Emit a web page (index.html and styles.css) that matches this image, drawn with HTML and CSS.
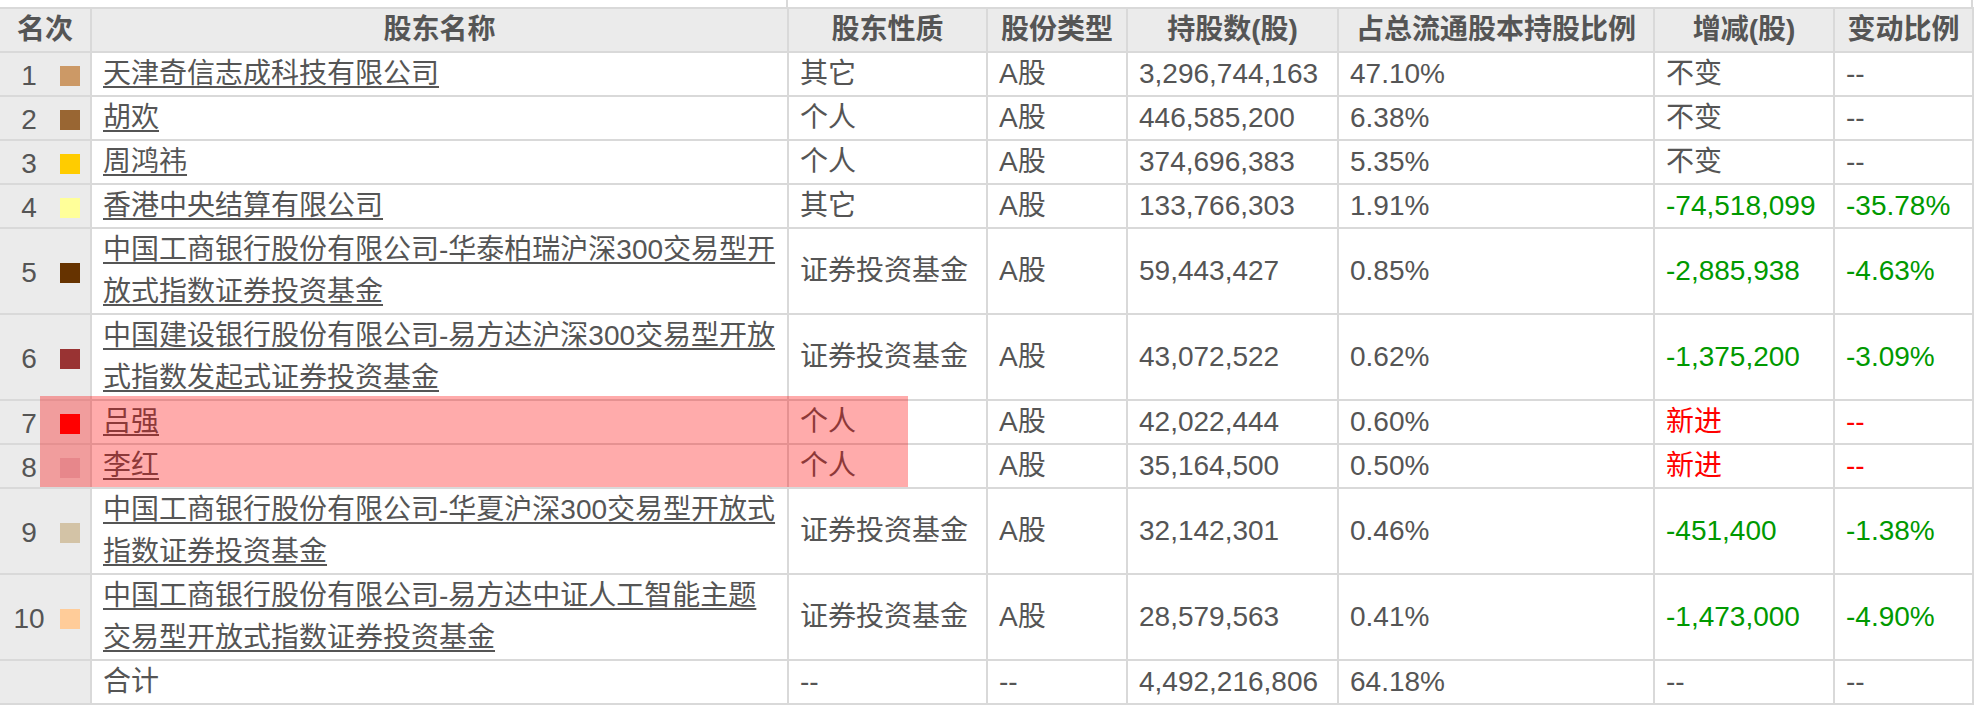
FILE: index.html
```html
<!DOCTYPE html>
<html lang="zh-CN">
<head>
<meta charset="utf-8">
<title>十大流通股东</title>
<link rel="stylesheet" href="styles.css">
</head>
<body>
<div class="page">
  <div class="strip">
    <div class="strip-a"></div>
    <div class="strip-b"></div>
  </div>
  <table class="holders">
    <colgroup>
      <col class="c-rank"><col class="c-name"><col class="c-kind"><col class="c-type"><col class="c-num"><col class="c-pct"><col class="c-chg"><col class="c-ratio">
    </colgroup>
    <thead>
      <tr>
        <th class="rank-h">名次</th>
        <th>股东名称</th>
        <th>股东性质</th>
        <th>股份类型</th>
        <th>持股数(股)</th>
        <th>占总流通股本持股比例</th>
        <th>增减(股)</th>
        <th>变动比例</th>
      </tr>
    </thead>
    <tbody>
      <tr>
        <td class="rank"><span class="no">1</span><span class="sq sq1"></span></td>
        <td><a class="link" href="#">天津奇信志成科技有限公司</a></td>
        <td>其它</td><td>A股</td><td>3,296,744,163</td><td>47.10%</td><td>不变</td><td>--</td>
      </tr>
      <tr>
        <td class="rank"><span class="no">2</span><span class="sq sq2"></span></td>
        <td><a class="link" href="#">胡欢</a></td>
        <td>个人</td><td>A股</td><td>446,585,200</td><td>6.38%</td><td>不变</td><td>--</td>
      </tr>
      <tr>
        <td class="rank"><span class="no">3</span><span class="sq sq3"></span></td>
        <td><a class="link" href="#">周鸿祎</a></td>
        <td>个人</td><td>A股</td><td>374,696,383</td><td>5.35%</td><td>不变</td><td>--</td>
      </tr>
      <tr>
        <td class="rank"><span class="no">4</span><span class="sq sq4"></span></td>
        <td><a class="link" href="#">香港中央结算有限公司</a></td>
        <td>其它</td><td>A股</td><td>133,766,303</td><td>1.91%</td><td class="down">-74,518,099</td><td class="down">-35.78%</td>
      </tr>
      <tr>
        <td class="rank"><span class="no">5</span><span class="sq sq5"></span></td>
        <td class="wrap"><a class="link" href="#">中国工商银行股份有限公司-华泰柏瑞沪深300交易型开<br>放式指数证券投资基金</a></td>
        <td>证券投资基金</td><td>A股</td><td>59,443,427</td><td>0.85%</td><td class="down">-2,885,938</td><td class="down">-4.63%</td>
      </tr>
      <tr>
        <td class="rank"><span class="no">6</span><span class="sq sq6"></span></td>
        <td class="wrap"><a class="link" href="#">中国建设银行股份有限公司-易方达沪深300交易型开放<br>式指数发起式证券投资基金</a></td>
        <td>证券投资基金</td><td>A股</td><td>43,072,522</td><td>0.62%</td><td class="down">-1,375,200</td><td class="down">-3.09%</td>
      </tr>
      <tr>
        <td class="rank"><span class="no">7</span><span class="sq sq7"></span></td>
        <td><a class="link" href="#">吕强</a></td>
        <td>个人</td><td>A股</td><td>42,022,444</td><td>0.60%</td><td class="up">新进</td><td class="up">--</td>
      </tr>
      <tr>
        <td class="rank"><span class="no">8</span><span class="sq sq8"></span></td>
        <td><a class="link" href="#">李红</a></td>
        <td>个人</td><td>A股</td><td>35,164,500</td><td>0.50%</td><td class="up">新进</td><td class="up">--</td>
      </tr>
      <tr>
        <td class="rank"><span class="no">9</span><span class="sq sq9"></span></td>
        <td class="wrap"><a class="link" href="#">中国工商银行股份有限公司-华夏沪深300交易型开放式<br>指数证券投资基金</a></td>
        <td>证券投资基金</td><td>A股</td><td>32,142,301</td><td>0.46%</td><td class="down">-451,400</td><td class="down">-1.38%</td>
      </tr>
      <tr>
        <td class="rank"><span class="no">10</span><span class="sq sq10"></span></td>
        <td class="wrap"><a class="link" href="#">中国工商银行股份有限公司-易方达中证人工智能主题<br>交易型开放式指数证券投资基金</a></td>
        <td>证券投资基金</td><td>A股</td><td>28,579,563</td><td>0.41%</td><td class="down">-1,473,000</td><td class="down">-4.90%</td>
      </tr>
      <tr>
        <td class="rank"></td>
        <td>合计</td>
        <td>--</td><td>--</td><td>4,492,216,806</td><td>64.18%</td><td>--</td><td>--</td>
      </tr>
    </tbody>
  </table>
  <div class="highlight"></div>
</div>
</body>
</html>
```

FILE: styles.css
```css
html, body {
  margin: 0;
  padding: 0;
  background: #ffffff;
}

.page {
  position: relative;
  width: 1978px;
  font-family: "Liberation Sans", "Noto Sans CJK SC", sans-serif;
  font-size: 28px;
  color: #555555;
}

.strip {
  display: flex;
  height: 7px;
}

.strip-a {
  width: 786px;
  border-right: 2px solid #d9d9d9;
}

.strip-b {
  width: 1183px;
  border-right: 2px solid #d9d9d9;
}

.holders {
  border-collapse: collapse;
  table-layout: fixed;
  width: 1974px;
  margin-left: -2px;
}

.c-rank { width: 92px; }
.c-name { width: 697px; }
.c-kind { width: 199px; }
.c-type { width: 140px; }
.c-num { width: 211px; }
.c-pct { width: 316px; }
.c-chg { width: 180px; }
.c-ratio { width: 139px; }

.holders th,
.holders td {
  border: 2px solid #d9d9d9;
  padding: 0 11px;
  line-height: 42px;
  vertical-align: middle;
  white-space: nowrap;
  text-align: left;
}

.holders th {
  background: #ebebeb;
  font-weight: bold;
  text-align: center;
  color: #555555;
}

.holders td.rank {
  background: #ebebeb;
  padding: 0 0 0 8px;
}

.no {
  display: inline-block;
  width: 42px;
  text-align: center;
  vertical-align: middle;
  line-height: 30px;
}

.sq {
  display: inline-block;
  width: 20px;
  height: 20px;
  margin-left: 10px;
  vertical-align: middle;
}

.sq1 { background: #cc9966; }
.sq2 { background: #996633; }
.sq3 { background: #ffcc00; }
.sq4 { background: #ffff99; }
.sq5 { background: #663300; }
.sq6 { background: #993333; }
.sq7 { background: #ff0000; }
.sq8 { background: #dccacf; }
.sq9 { background: #d3c3a6; }
.sq10 { background: #ffcc99; }

.link {
  color: #555555;
  text-decoration: underline;
  text-decoration-thickness: 2px;
  text-underline-offset: 3px;
}

.down { color: #009900; }
.holders td.up { color: #ff0000; }

.highlight {
  position: absolute;
  left: 40px;
  top: 396px;
  width: 868px;
  height: 91px;
  background: rgba(255, 0, 0, 0.33);
}
```
